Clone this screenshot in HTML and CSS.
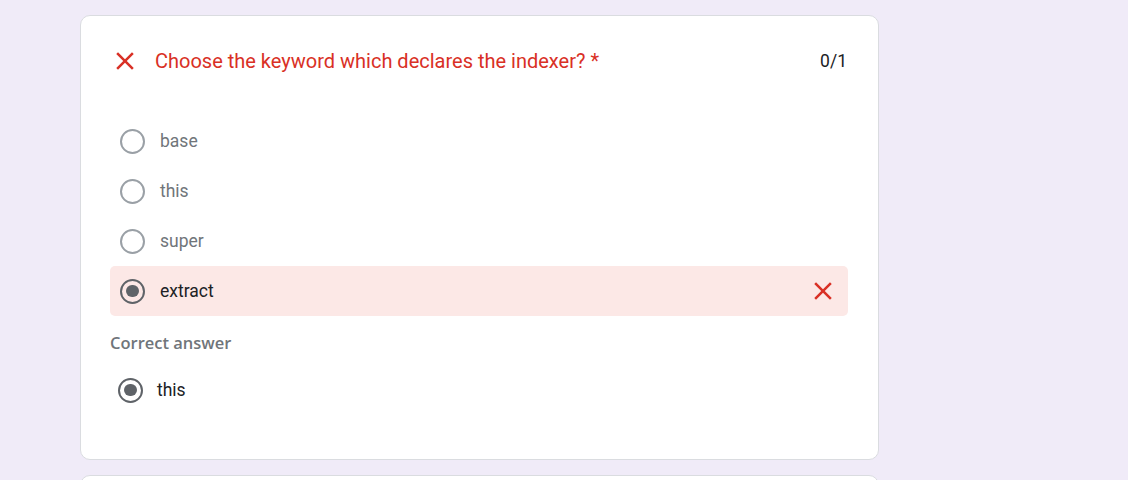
FILE: index.html
```html
<!DOCTYPE html>
<html lang="en">
<head>
<meta charset="utf-8">
<title>Quiz result</title>
<link rel="stylesheet" href="styles.css">
</head>
<body>
<main class="page">
  <section class="card">
    <header class="q-header">
      <svg class="x-icon" viewBox="0 0 24 24" aria-hidden="true"><path d="M19 6.41L17.59 5 12 10.59 6.41 5 5 6.41 10.59 12 5 17.59 6.41 19 12 13.41 17.59 19 19 17.59 13.41 12z"/></svg>
      <h2 class="q-title">Choose the keyword which declares the indexer? *</h2>
      <span class="score">0/1</span>
    </header>
    <ul class="options">
      <li class="option"><span class="radio"></span><span class="opt-text">base</span></li>
      <li class="option"><span class="radio"></span><span class="opt-text">this</span></li>
      <li class="option"><span class="radio"></span><span class="opt-text">super</span></li>
      <li class="option wrong"><span class="radio checked"></span><span class="opt-text">extract</span>
        <svg class="x-icon end" viewBox="0 0 24 24" aria-hidden="true"><path d="M19 6.41L17.59 5 12 10.59 6.41 5 5 6.41 10.59 12 5 17.59 6.41 19 12 13.41 17.59 19 19 17.59 13.41 12z"/></svg>
      </li>
    </ul>
    <div class="correct-label">Correct answer</div>
    <div class="option correct"><span class="radio checked"></span><span class="opt-text">this</span></div>
  </section>
  <section class="card next"></section>
</main>
</body>
</html>
```

FILE: styles.css
```css
* { box-sizing: border-box; }
html, body { margin: 0; padding: 0; }
body {
  background: #f0ebf8;
  font-family: Roboto, "Noto Sans", Arial, sans-serif;
  color: #202124;
  overflow: hidden;
}
.page {
  padding: 15px 0 0 80px;
  display: flex;
  flex-direction: column;
  gap: 15px;
}
.card {
  width: 799px;
  background: #fff;
  border: 1px solid #dadce0;
  border-radius: 10px;
  padding: 30px 30px 30px 29px;
}
.card.next { height: 60px; }
.q-header {
  display: flex;
  align-items: center;
  height: 30px;
}
.x-icon {
  width: 30px;
  height: 30px;
  fill: #d93025;
  flex: none;
}
.q-title {
  margin: 0 0 0 15px;
  font-size: 20px;
  font-weight: 400;
  color: #d93025;
  flex: 1;
  line-height: 30px;
}
.score {
  font-size: 17.5px;
  color: #202124;
  margin-right: 1px;
}
.options {
  list-style: none;
  margin: 40px 0 0;
  padding: 0;
}
.option {
  display: flex;
  align-items: center;
  height: 50px;
  padding: 0 10px;
  border-radius: 5px;
}
.radio {
  width: 25px;
  height: 25px;
  border: 2.5px solid #9aa0a6;
  border-radius: 50%;
  flex: none;
  display: flex;
  align-items: center;
  justify-content: center;
}
.radio.checked { border-color: #5f6368; }
.radio.checked::after {
  content: "";
  width: 12.5px;
  height: 12.5px;
  border-radius: 50%;
  background: #5f6368;
}
.opt-text {
  margin-left: 15px;
  font-size: 17.5px;
  color: #70757a;
  flex: 1;
}
.option.wrong { background: #fce8e6; }
.option.wrong .opt-text { color: #202124; }
.correct-label {
  margin-top: 14px;
  font-family: "Open Sans", Roboto, Arial, sans-serif;
  font-size: 16.5px;
  font-weight: 600;
  color: #70757a;
  line-height: 26px;
}
.option.correct {
  padding: 0 8px;
  margin-top: 9px;
  margin-bottom: 14px;
}
.option.correct .opt-text { color: #202124; margin-left: 14px; }
```
